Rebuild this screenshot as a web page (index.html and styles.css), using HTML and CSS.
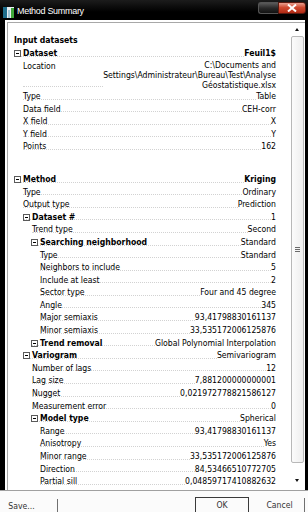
FILE: index.html
```html
<!DOCTYPE html>
<html lang="en">
<head>
    <meta charset="UTF-8">
    <title>Method Summary</title>
    <link rel="stylesheet" href="styles.css">
</head>
<body>
    <div class="titlebar">
        <svg class="app-icon" width="11" height="11" viewBox="0 0 11 11">
            <rect x="0" y="0" width="11" height="11" fill="#e8eef2"/>
            <rect x="0" y="0" width="4" height="11" fill="#1f6e8c"/>
            <rect x="8" y="1" width="3" height="10" fill="#3fa83a"/>
            <rect x="5" y="3" width="2" height="8" fill="#9fc7d8"/>
        </svg>
        <span class="title">Method Summary</span>
        <div class="caption">
            <span class="cap-btn"></span>
            <span class="close-btn">
                <svg width="12" height="8" viewBox="0 0 12 8">
                    <path d="M2 0.5 L10 7.5 M10 0.5 L2 7.5" stroke="#fff" stroke-width="2"/>
                </svg>
            </span>
        </div>
    </div>

    <div class="client">
        <div class="panel">
            <div class="summary">
                <div class="section">Input datasets</div>

                <div class="row head"><span class="name"><i class="tog"></i>Dataset</span><span class="val">Feuil1$</span></div>
                <div class="row i1 tall"><span class="name">Location</span><span class="val multi">C:\Documents and<br>Settings\Administrateur\Bureau\Test\Analyse<br>Géostatistique.xlsx</span></div>
                <div class="row i1"><span class="name">Type</span><span class="val">Table</span></div>
                <div class="row i1"><span class="name">Data field</span><span class="val">CEH-corr</span></div>
                <div class="row i1"><span class="name">X field</span><span class="val">X</span></div>
                <div class="row i1"><span class="name">Y field</span><span class="val">Y</span></div>
                <div class="row i1"><span class="name">Points</span><span class="val">162</span></div>

                <div class="row head gap"><span class="name"><i class="tog"></i>Method</span><span class="val">Kriging</span></div>
                <div class="row i1"><span class="name">Type</span><span class="val">Ordinary</span></div>
                <div class="row i1"><span class="name">Output type</span><span class="val">Prediction</span></div>
                <div class="row sub t1"><span class="name"><i class="tog"></i>Dataset #</span><span class="val">1</span></div>
                <div class="row i2"><span class="name">Trend type</span><span class="val">Second</span></div>
                <div class="row sub t2"><span class="name"><i class="tog"></i>Searching neighborhood</span><span class="val">Standard</span></div>
                <div class="row i3"><span class="name">Type</span><span class="val">Standard</span></div>
                <div class="row i3"><span class="name">Neighbors to include</span><span class="val">5</span></div>
                <div class="row i3"><span class="name">Include at least</span><span class="val">2</span></div>
                <div class="row i3"><span class="name">Sector type</span><span class="val">Four and 45 degree</span></div>
                <div class="row i3"><span class="name">Angle</span><span class="val">345</span></div>
                <div class="row i3"><span class="name">Major semiaxis</span><span class="val">93,41798830161137</span></div>
                <div class="row i3"><span class="name">Minor semiaxis</span><span class="val">33,535172006125876</span></div>
                <div class="row sub t2"><span class="name"><i class="tog"></i>Trend removal</span><span class="val">Global Polynomial Interpolation</span></div>
                <div class="row sub t1"><span class="name"><i class="tog"></i>Variogram</span><span class="val">Semivariogram</span></div>
                <div class="row i2"><span class="name">Number of lags</span><span class="val">12</span></div>
                <div class="row i2"><span class="name">Lag size</span><span class="val">7,881200000000001</span></div>
                <div class="row i2"><span class="name">Nugget</span><span class="val">0,021972778821586127</span></div>
                <div class="row i2"><span class="name">Measurement error</span><span class="val">0</span></div>
                <div class="row sub t2"><span class="name"><i class="tog"></i>Model type</span><span class="val">Spherical</span></div>
                <div class="row i3"><span class="name">Range</span><span class="val">93,41798830161137</span></div>
                <div class="row i3"><span class="name">Anisotropy</span><span class="val">Yes</span></div>
                <div class="row i3"><span class="name">Minor range</span><span class="val">33,535172006125876</span></div>
                <div class="row i3"><span class="name">Direction</span><span class="val">84,53466510772705</span></div>
                <div class="row i3"><span class="name">Partial sill</span><span class="val">0,04859717410882632</span></div>
            </div>

            <div class="scrollbar">
                <div class="arrow up"></div>
                <div class="track">
                    <div class="thumb"><span class="grip"></span></div>
                </div>
                <div class="arrow down"></div>
            </div>
        </div>
    </div>

    <div class="footer">
        <span class="btn save">Save...</span>
        <span class="spacer"></span>
        <span class="btn ok">OK</span>
        <span class="btn cancel">Cancel</span>
    </div>
</body>
</html>
```

FILE: styles.css
```css
body {
    margin: 0;
    width: 308px;
    height: 512px;
    overflow: hidden;
    background-color: #000;
    font-family: "DejaVu Sans Condensed", "DejaVu Sans", sans-serif;
    font-stretch: condensed;
    font-size: 8.6px;
    color: #000;
    display: flex;
    flex-direction: column;
}

/* title bar */

.titlebar {
    height: 20px;
    display: flex;
    align-items: flex-start;
    background: linear-gradient(#1c1c1c, #000 60%);
}

.app-icon {
    margin: 7px 0 0 3px;
}

.title {
    margin: 6px 0 0 3px;
    font-family: "Liberation Sans", Arial, sans-serif;
    font-stretch: normal;
    font-size: 9px;
    letter-spacing: -0.3px;
    color: #fff;
}

.caption {
    margin-left: auto;
    margin-top: 2px;
    margin-right: 2px;
    display: flex;
    height: 12px;
}

.cap-btn {
    width: 19px;
    border: 1px solid #555;
    border-right: none;
    border-radius: 3px 0 0 3px;
    background: linear-gradient(#5a5a5a, #2a2a2a 50%, #111);
}

.close-btn {
    width: 26px;
    border: 1px solid #5a1a10;
    border-radius: 0 3px 3px 0;
    background: linear-gradient(#e8a090, #d04a30 45%, #b02a14);
    display: flex;
    align-items: center;
    justify-content: center;
}

/* client area */

.client {
    flex: 1;
    margin: 0 3px 0 5px;
    padding: 2px 0 0 2px;
    background-color: #fff;
    display: flex;
    min-height: 0;
}

.panel {
    flex: 1;
    display: flex;
    border-top: 1px solid #a8a8a8;
    border-left: 1px solid #a8a8a8;
    min-height: 0;
}

.summary {
    flex: 1;
    padding: 10.5px 15px 0 6px;
    overflow: hidden;
}

.section {
    font-weight: bold;
    line-height: 12.6px;
    height: 13.5px;
}

.row {
    display: flex;
    height: 12.6px;
    line-height: 12.6px;
    white-space: nowrap;
}

.row .name {
    flex: 1;
    min-width: 0;
    margin-bottom: 3px;
    border-bottom: 1px dotted #d2d2d2;
}

.row .val {
    text-align: right;
}

.row.tall {
    height: 30.4px;
}

.val.multi {
    padding-top: 1.8px;
    line-height: 9.9px;
}

.row.gap {
    margin-top: 20px;
}

.head .name,
.head .val,
.sub .name {
    font-weight: bold;
}

.i1 { padding-left: 9px; }
.t1 { padding-left: 9px; }
.i2 { padding-left: 18px; }
.t2 { padding-left: 17px; }
.i3 { padding-left: 26px; }

.tog {
    display: inline-block;
    position: relative;
    width: 7px;
    height: 7px;
    box-sizing: border-box;
    border: 1px solid #5a5a5a;
    margin-right: 2px;
    vertical-align: middle;
}

.tog::after {
    content: "";
    position: absolute;
    left: 1px;
    top: 2px;
    width: 3px;
    height: 1px;
    background-color: #000;
}

/* scrollbar */

.scrollbar {
    width: 14px;
    display: flex;
    flex-direction: column;
}

.arrow {
    height: 13px;
    position: relative;
}

.arrow::after {
    content: "";
    position: absolute;
    left: 4px;
    top: 5px;
    border-left: 2.5px solid transparent;
    border-right: 2.5px solid transparent;
}

.arrow.up::after {
    border-bottom: 3px solid #111;
}

.arrow.down {
    height: 17px;
}

.arrow.down::after {
    top: 6px;
    border-top: 3px solid #111;
}

.track {
    flex: 1;
    padding: 0 1px 10px 0;
    display: flex;
}

.thumb {
    flex: 1;
    border: 1px solid #b8b8b8;
    border-radius: 2px;
    background: linear-gradient(90deg, #fbfbfb, #eeeeee);
    display: flex;
    align-items: center;
    justify-content: center;
}

.grip {
    width: 5px;
    height: 5px;
    background: repeating-linear-gradient(#6a6a6a 0, #6a6a6a 1px, transparent 1px, transparent 2px);
}

/* buttons */

.footer {
    height: 21px;
    background-color: #fbfbfb;
    border-top: 1px solid #a0a0a0;
    display: flex;
    align-items: flex-end;
    color: #333;
}

.btn {
    height: 14px;
    line-height: 14px;
    box-sizing: border-box;
    text-align: center;
}

.save {
    width: 58px;
    padding-right: 14px;
    border-right: 1px solid #707070;
    height: 13px;
}

.spacer {
    flex: 1;
}

.ok {
    width: 54px;
    height: 15px;
    border: 1px solid #3a3a3a;
    border-bottom: none;
}

.cancel {
    width: 56px;
    margin-right: 3px;
    padding-left: 6px;
    border-right: 1px solid #707070;
}
```
